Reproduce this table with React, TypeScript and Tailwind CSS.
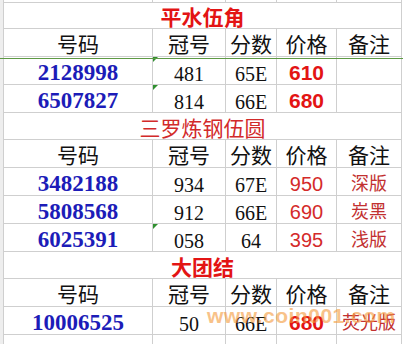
import React from "react";

const LINE = "border-[#cfcfcf]";

type Row =
  | { kind: "title"; text: string; cls: string }
  | { kind: "head" }
  | {
      kind: "data";
      no: string;
      guan: string;
      fen: string;
      price: string;
      priceCls: string;
      note?: string;
      mark?: boolean;
    };

const rows: Row[] = [
  { kind: "title", text: "平水伍角", cls: "font-bold text-[#e31414]" },
  { kind: "head" },
  { kind: "data", no: "2128998", guan: "481", fen: "65E", price: "610", priceCls: "font-bold text-[21px] text-[#e31414]", mark: true },
  { kind: "data", no: "6507827", guan: "814", fen: "66E", price: "680", priceCls: "font-bold text-[21px] text-[#e31414]", mark: true },
  { kind: "title", text: "三罗炼钢伍圆", cls: "text-[#d22a2a]" },
  { kind: "head" },
  { kind: "data", no: "3482188", guan: "934", fen: "67E", price: "950", priceCls: "text-[20px] text-[#d42a2a]", note: "深版" },
  { kind: "data", no: "5808568", guan: "912", fen: "66E", price: "690", priceCls: "text-[20px] text-[#d42a2a]", note: "炭黑" },
  { kind: "data", no: "6025391", guan: "058", fen: "64", price: "395", priceCls: "text-[20px] text-[#d42a2a]", note: "浅版", mark: true },
  { kind: "title", text: "大团结", cls: "font-bold text-[#e31414]" },
  { kind: "head" },
  { kind: "data", no: "10006525", guan: "50", fen: "66E", price: "680", priceCls: "font-bold text-[21px] text-[#e31414]", note: "荧光版" },
];

const cols = ["w-[149px]", "w-[73px]", "w-[51px]", "w-[60px]", "w-[65px]"];
const cjk = "font-['Noto_Sans_CJK_SC',sans-serif]";
const serif = "font-['Liberation_Serif','Noto_Sans_CJK_SC',serif]";
const sans = "font-['Liberation_Sans',Arial,sans-serif]";

function Cell({ i, children, className = "" }: { i: number; children?: React.ReactNode; className?: string }) {
  return (
    <div
      className={`relative ${cols[i]} h-[28px] shrink-0 border-r border-b ${LINE} flex items-end justify-center leading-none ${className}`}
    >
      {children}
    </div>
  );
}

function Mark() {
  return (
    <div className="absolute left-0 top-0 w-0 h-0 border-t-[5px] border-r-[5px] border-t-[#2f8f2f] border-r-transparent" />
  );
}

export default function App() {
  const heads = ["号码", "冠号", "分数", "价格", "备注"];
  return (
    <div className="relative w-[403px] h-[344px] bg-white overflow-hidden">
      <div className="flex h-full">
        {/* row header strip */}
        <div className={`w-[4px] h-full bg-[#eeeeee] border-r ${LINE} shrink-0`} />
        <div className="flex flex-col">
          {/* previous row sliver */}
          <div className={`flex h-[3px] border-b ${LINE}`}>
            {cols.map((c, i) => (
              <div key={i} className={`${c} h-full border-r ${LINE}`} />
            ))}
          </div>
          {rows.map((r, ri) => {
            if (r.kind === "title") {
              return (
                <div
                  key={ri}
                  className={`w-[398px] h-[28px] border-r border-b ${LINE} flex items-end justify-center pb-[1px] leading-none text-[21px] ${cjk} ${r.cls}`}
                >
                  {r.text}
                </div>
              );
            }
            if (r.kind === "head") {
              return (
                <div key={ri} className="flex">
                  {heads.map((h, i) => (
                    <Cell key={i} i={i} className={`text-[21px] text-[#111] ${cjk} pb-[2px]`}>
                      {h}
                    </Cell>
                  ))}
                </div>
              );
            }
            return (
              <div key={ri} className="flex">
                <Cell i={0} className={`text-[23px] font-bold text-[#1c1cb8] ${serif}`}>
                  {r.no}
                </Cell>
                <Cell i={1} className={`text-[20px] text-[#111] ${serif}`}>
                  {r.mark && <Mark />}
                  {r.guan}
                </Cell>
                <Cell i={2} className={`text-[20px] text-[#111] ${serif}`}>
                  {r.fen}
                </Cell>
                <Cell i={3} className={`${sans} ${r.priceCls} pb-[1px]`}>
                  {r.price}
                </Cell>
                <Cell i={4} className={`text-[18px] text-[#c23030] ${cjk} pb-[4px]`}>
                  {r.note}
                </Cell>
              </div>
            );
          })}
          <div className="flex h-[10px]">
            {cols.map((c, i) => (
              <div key={i} className={`${c} h-full border-r ${LINE}`} />
            ))}
          </div>
        </div>
      </div>
      {/* frozen pane line */}
      <div className="absolute left-0 top-[58px] w-full h-px bg-[#5e9a45]" />
      {/* watermark */}
      <div
        className={`absolute left-[207px] top-[305px] text-[21px] font-bold ${sans} text-[#f59a3c] opacity-60 leading-none tracking-[0.5px]`}
      >
        www.coin001.com
      </div>
    </div>
  );
}
